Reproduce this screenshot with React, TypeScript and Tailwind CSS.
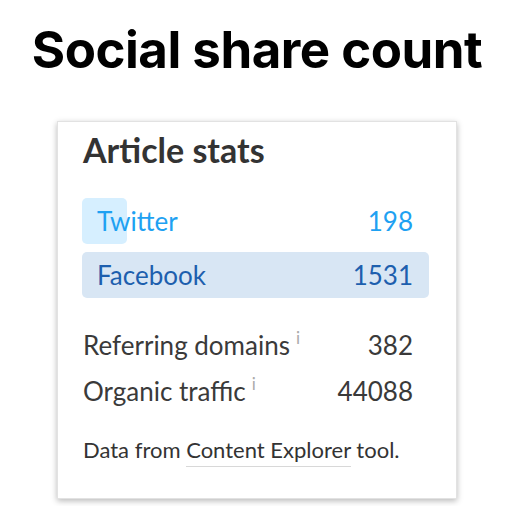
import React from "react";

const shares = [
  { name: "Twitter", value: 198, bar: "bg-[#d6efff]", text: "text-[#1ea1f2]" },
  { name: "Facebook", value: 1531, bar: "bg-[#d8e6f4]", text: "text-[#1d5fae]" },
];
const max = 1531;

function Info() {
  return <span className="relative -top-[11px] ml-[6px] text-[17px] text-[#ababab]">i</span>;
}

export default function App() {
  return (
    <div className="w-[514px] h-[506px] bg-white flex flex-col items-center overflow-hidden">
      <h1
        className="mt-[22px] text-[51px] leading-[56px] font-bold text-black tracking-[-0.5px]"
        style={{ fontFamily: "Inter, 'Liberation Sans', sans-serif" }}
      >
        Social share count
      </h1>
      <div
        className="mt-[43px] w-[400px] h-[378px] bg-white border border-[#e2e2e2] shadow-[0_2px_6px_rgba(0,0,0,0.28)] pt-[8px] text-[#333]"
        style={{ fontFamily: "Lato, 'Open Sans', sans-serif" }}
      >
        <div className="pl-[25px] text-[34px] leading-[40px] font-bold text-[#333]">Article stats</div>
        <div className="mt-[28px] ml-[24px] mr-[27px] flex flex-col gap-[8px]">
          {shares.map((s) => (
            <div key={s.name} className="relative h-[46px]">
              <div
                className={`absolute left-0 top-0 h-full rounded-[5px] ${s.bar}`}
                style={{ width: `${(s.value / max) * 100}%` }}
              />
              <div className={`relative h-full flex items-center justify-between pl-[15px] pr-[16px] text-[26px] ${s.text}`}>
                <span>{s.name}</span>
                <span>{s.value}</span>
              </div>
            </div>
          ))}
        </div>
        <div className="mt-[26px] ml-[25px] mr-[43px] flex flex-col text-[26px] leading-[42px] text-[#3a3a3a]">
          <div className="flex justify-between">
            <span>
              Referring domains
              <Info />
            </span>
            <span>382</span>
          </div>
          <div className="flex justify-between">
            <span>
              Organic traffic
              <Info />
            </span>
            <span>44088</span>
          </div>
        </div>
        <div className="mt-[19px] ml-[25px] text-[22px] leading-[30px] text-[#333]">
          Data from{" "}
          <span className="border-b border-[#d8d8d8] pb-[3px]">Content Explorer</span> tool.
        </div>
      </div>
    </div>
  );
}
